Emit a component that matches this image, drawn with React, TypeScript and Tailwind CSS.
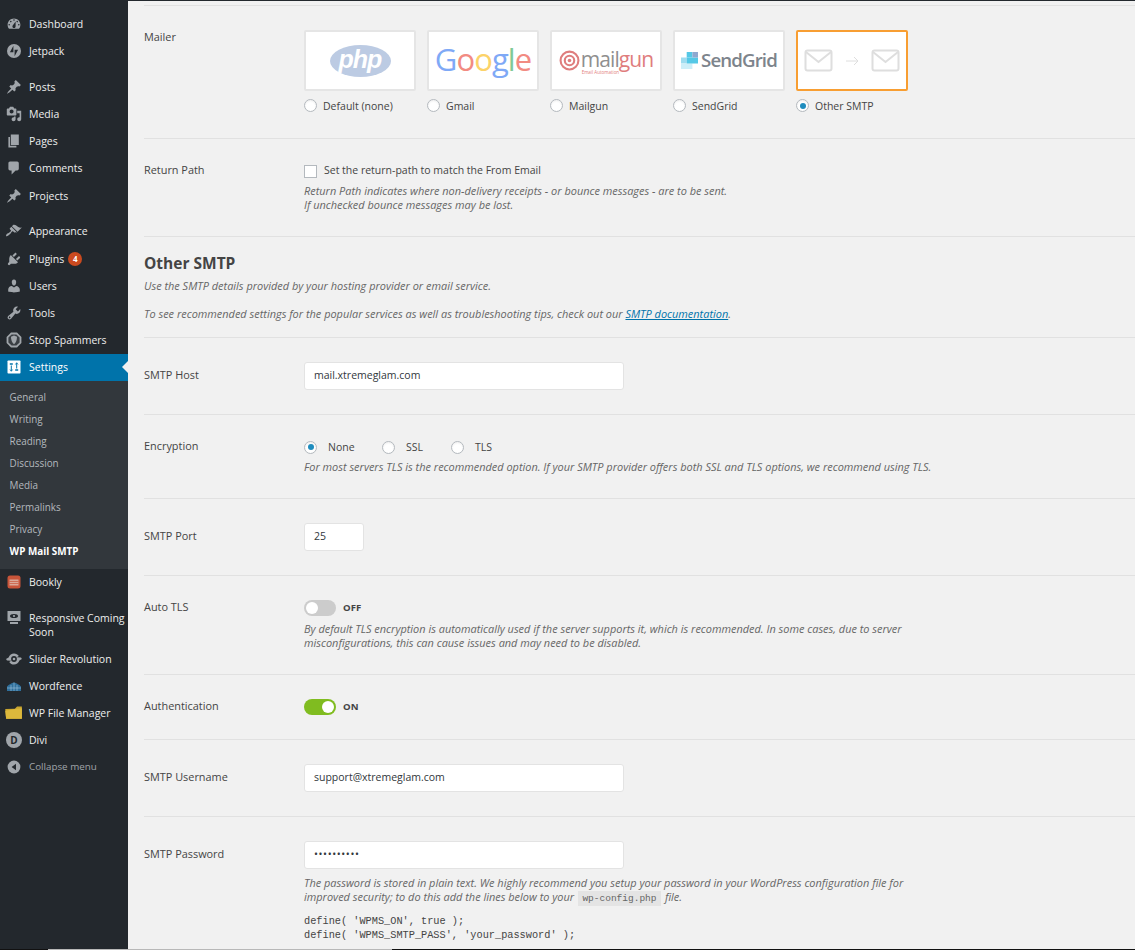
import React from "react";

const P: Record<string, string> = {
  dash: "M3.76 16h12.48c1.1-1.37 1.76-3.11 1.76-5 0-4.42-3.58-8-8-8s-8 3.58-8 8c0 1.89.66 3.63 1.76 5zM10 4c.55 0 1 .45 1 1s-.45 1-1 1-1-.45-1-1 .45-1 1-1zM6 6c.55 0 1 .45 1 1s-.45 1-1 1-1-.45-1-1 .45-1 1-1zm8 0c.55 0 1 .45 1 1s-.45 1-1 1-1-.45-1-1 .45-1 1-1zm-5.37 5.55L12 7v6c0 1.1-.9 2-2 2s-2-.9-2-2c0-.57.24-1.08.63-1.45zM4 10c.55 0 1 .45 1 1s-.45 1-1 1-1-.45-1-1 .45-1 1-1zm12 0c.55 0 1 .45 1 1s-.45 1-1 1-1-.45-1-1 .45-1 1-1z",
  pin: "M10.44 3.02l1.82-1.82 6.36 6.35-1.83 1.82c-1.05-.68-2.48-.57-3.41.36l-.75.75c-.92.93-1.04 2.35-.35 3.41l-1.83 1.82-2.41-2.41-2.8 2.79c-.42.42-3.38 2.71-3.8 2.29s1.86-3.39 2.28-3.81l2.79-2.79L4.1 9.36l1.83-1.82c1.05.69 2.48.57 3.4-.36l.75-.75c.93-.92 1.05-2.35.36-3.41z",
  media: "M13 11V4c0-.55-.45-1-1-1h-1.67L9 1H5L3.67 3H2c-.55 0-1 .45-1 1v7c0 .55.45 1 1 1h10c.55 0 1-.45 1-1zM7 4.5c1.38 0 2.5 1.12 2.5 2.5S8.38 9.5 7 9.5 4.5 8.38 4.5 7 5.62 4.5 7 4.5zM14 6h5v10.5c0 1.38-1.12 2.5-2.5 2.5S14 17.88 14 16.5s1.12-2.5 2.5-2.5c.17 0 .34.02.5.05V9h-3V6zm-4 8.05V13h2v3.5c0 1.38-1.12 2.5-2.5 2.5S7 17.88 7 16.5 8.12 14 9.5 14c.17 0 .34.02.5.05z",
  page: "M6 15V2h10v13H6zm-1 1h8v2H3V5h2v11z",
  comment: "M5 2h9c1.1 0 2 .9 2 2v7c0 1.1-.9 2-2 2h-2l-5 5v-5H5c-1.1 0-2-.9-2-2V4c0-1.1.9-2 2-2z",
  brush: "M14.48 11.06L7.41 3.99l1.5-1.5c.5-.56 2.3-.47 3.51.32 1.21.8 1.43 1.28 2.91 2.1 1.18.64 2.45 1.26 4.45.85zM13.77 11.77L6.7 4.7 4.93 6.47c-.39.39-.39 1.02 0 1.41l1.06 1.06c.39.39.39 1.03 0 1.42-.6.6-1.43 1.11-2.21 1.69-.35.26-.7.53-1.01.84C1.43 12.8.4 14.6 0 15.8c-.19.57.27 1.03.84.84 1.19-.4 2.9-1.43 4.25-2.78.31-.31.58-.66.84-1.01.58-.78 1.09-1.61 1.69-2.21.39-.39 1.03-.39 1.42 0l1.06 1.06c.39.39 1.02.39 1.41 0z",
  plug: "M13.11 4.36L9.87 7.6 8 5.73l3.24-3.24c.35-.34 1.05-.2 1.56.32.52.51.66 1.21.31 1.55zm-8 1.77l.91-1.12 9.01 9.01-1.19.84c-.71.71-2.63 1.16-3.82 1.16H6.14L4.9 17.26c-.59.59-1.54.59-2.12 0-.59-.58-.59-1.53 0-2.12l1.24-1.24v-3.88c0-1.13.4-3.19 1.09-3.89zm7.26 3.97l3.24-3.24c.34-.35 1.04-.21 1.55.31.52.51.66 1.21.31 1.55l-3.24 3.25z",
  user: "M10 9.25c-2.27 0-2.73-3.44-2.73-3.44C7 4.02 7.82 2 9.97 2c2.16 0 2.98 2.02 2.71 3.81 0 0-.41 3.44-2.68 3.44zm0 2.57L12.72 10c2.39 0 4.52 2.33 4.52 4.53v2.49s-3.65 1.13-7.24 1.13c-3.65 0-7.24-1.13-7.24-1.13v-2.49c0-2.25 1.94-4.48 4.47-4.48z",
  tool: "M16.68 9.77c-1.34 1.34-3.3 1.67-4.95.99l-5.41 6.52c-.99.99-2.59.99-3.58 0s-.99-2.59 0-3.57l6.52-5.42c-.68-1.65-.35-3.61.99-4.95 1.28-1.28 3.12-1.62 4.72-1.06l-2.89 2.89 2.82 2.82 2.86-2.87c.53 1.58.18 3.39-1.08 4.65zM3.81 16.21c.4.39 1.04.39 1.43 0 .4-.4.4-1.04 0-1.43-.39-.4-1.03-.4-1.43 0-.39.39-.39 1.03 0 1.43z",
};

function Dash({ d }: { d: string }) {
  return (
    <svg viewBox="0 0 20 20" className="w-4 h-4" fill="#a0a5aa">
      <path d={d} fillRule="evenodd" />
    </svg>
  );
}

function Custom({ name }: { name: string }) {
  const box = "w-4 h-4";
  switch (name) {
    case "jetpack":
      return (
        <svg viewBox="0 0 16 16" className={box}>
          <circle cx="8" cy="8" r="7" fill="#a0a5aa" />
          <path d="M7.4 2.8v6.4H3.9zM8.6 13.2V6.8h3.5z" fill="#23282d" />
        </svg>
      );
    case "stop":
      return (
        <svg viewBox="0 0 16 16" className={box}>
          <path d="M5 .6h6L15.4 5v6L11 15.4H5L.6 11V5z" fill="#a0a5aa" />
          <path d="M5.6 2.4h4.800l3.200 3.200v4.800l-3.200 3.200H5.600l-3.200-3.200V5.600z" fill="#3a3f44" />
          <path d="M8 3.600l3 1.200c0 3.200-.8 5.600-3 7.400-2.200-1.800-3-4.200-3-7.400z" fill="#a0a5aa" />
        </svg>
      );
    case "settings":
      return (
        <svg viewBox="0 0 16 16" className={box}>
          <rect x="1.500" y="1.500" width="13" height="13" rx=".8" fill="#fff" />
          <path d="M5.300 6.500v5.500M10.700 4v5.500" stroke="#0073aa" strokeWidth="1" />
          <path d="M3.800 5h3M9.200 11h3" stroke="#0073aa" strokeWidth="1.300" />
          <path d="M4 10.500l1.300 1.800 1.300-1.800M9.400 5.500l1.300-1.800 1.300 1.800" stroke="#0073aa" strokeWidth=".8" fill="none" />
        </svg>
      );
    case "bookly":
      return (
        <svg viewBox="0 0 16 16" className={box}>
          <rect x="1.500" y="1.500" width="13" height="13" rx="2.500" fill="#c8553a" />
          <rect x="3.500" y="5.500" width="9" height="6" fill="#d9a898" />
          <path d="M3.500 7.500h9M3.500 9.500h9" stroke="#c8553a" strokeWidth=".7" />
        </svg>
      );
    case "responsive":
      return (
        <svg viewBox="0 0 16 16" className={box}>
          <rect x="1.500" y="1" width="13" height="10" fill="#a0a5aa" />
          <ellipse cx="8" cy="6" rx="4" ry="2" fill="#23282d" />
          <circle cx="8" cy="6" r="1.100" fill="#a0a5aa" />
          <rect x="4" y="12" width="8" height="2" fill="#a0a5aa" />
        </svg>
      );
    case "slider":
      return (
        <svg viewBox="0 0 16 16" className={box}>
          <path d="M0 8l2.600-1.600C3.600 3.800 5.600 2.400 8 2.400c2 0 3.800 1 4.800 2.600l-2 1.200L15 6.600l.9 1.400-2.500 1.600c-1 2.600-3 4-5.400 4-2 0-3.800-1-4.800-2.600l2-1.200L1 9.400z" fill="#a0a5aa" />
          <circle cx="8" cy="8" r="2.900" fill="#23282d" />
          <circle cx="8" cy="8" r="1.300" fill="#a0a5aa" />
        </svg>
      );
    case "wordfence":
      return (
        <svg viewBox="0 0 16 16" className={box}>
          <path d="M1 13V8.500C3 6.500 5.500 5 8 4.500c2.500.5 5 2 7 4V13z" fill="#2f6f9b" />
          <path d="M8 4.500V13M5 7v6M11 7v6M1 10h14" stroke="#9fc3dd" strokeWidth=".6" />
        </svg>
      );
    case "folder":
      return (
        <svg viewBox="0 0 20 16" className="w-[18px] h-[14px]">
          <path d="M0 3.500 1 14.500h18V.5h-5.500L11 3.200z" fill="#c9a52f" />
          <path d="M0 5.500 11 3.500 19 2.500V14.500H1z" fill="#dcb83c" />
        </svg>
      );
    case "collapse":
      return (
        <svg viewBox="0 0 16 16" className={box}>
          <circle cx="8" cy="8" r="6.400" fill="#a0a5aa" />
          <path d="M10 4.800v6.400L5.600 8z" fill="#23282d" />
        </svg>
      );
  }
  return null;
}

function Item({
  icon,
  label,
  big,
  extra,
  mt,
}: {
  icon: React.ReactNode;
  label: React.ReactNode;
  big?: boolean;
  extra?: React.ReactNode;
  mt?: string;
}) {
  return (
    <div className={`flex items-center text-[#eeeeee] ${big ? "h-[41px]" : "h-[27.2px]"} ${mt ?? ""}`}>
      <div className={`w-[29px] shrink-0 flex justify-center pr-[1px] ${big ? "self-start pt-[6px]" : ""}`}>{icon}</div>
      <div className="leading-[14px] whitespace-nowrap">{label}</div>
      {extra}
    </div>
  );
}

function Sidebar() {
  const sub = ["General", "Writing", "Reading", "Discussion", "Media", "Permalinks", "Privacy"];
  return (
    <aside className="w-[128px] shrink-0 bg-[#23282d] pt-[9.4px] text-[10.5px]">
      <Item icon={<Dash d={P.dash} />} label="Dashboard" />
      <Item icon={<Custom name="jetpack" />} label="Jetpack" />
      <Item mt="mt-[8.400px]" icon={<Dash d={P.pin} />} label="Posts" />
      <Item icon={<Dash d={P.media} />} label="Media" />
      <Item icon={<Dash d={P.page} />} label="Pages" />
      <Item icon={<Dash d={P.comment} />} label="Comments" />
      <Item icon={<Dash d={P.pin} />} label="Projects" />
      <Item mt="mt-[8.800px]" icon={<Dash d={P.brush} />} label="Appearance" />
      <Item
        icon={<Dash d={P.plug} />}
        label={<span className="relative top-[0.5px]">Plugins</span>}
        extra={
          <span className="ml-[4px] w-[14px] h-[14px] rounded-full bg-[#ca4a1f] text-white text-[8px] font-bold flex items-center justify-center">
            4
          </span>
        }
      />
      <Item icon={<Dash d={P.user} />} label="Users" />
      <Item icon={<Dash d={P.tool} />} label="Tools" />
      <Item icon={<Custom name="stop" />} label="Stop Spammers" />
      <div className="relative bg-[#0073aa] text-white">
        <Item icon={<Custom name="settings" />} label={<span className="text-white">Settings</span>} />
        <span className="absolute right-0 top-[7px] w-0 h-0 border-y-[6.500px] border-y-transparent border-r-[6.500px] border-r-[#f1f1f1]" />
      </div>
      <div className="bg-[#32373c] pt-[5px] pb-[6.800px] text-[9.9px] text-[#b4b9be]">
        {sub.map((s) => (
          <div key={s} className="h-[22px] flex items-center pl-[9.600px]">
            {s}
          </div>
        ))}
        <div className="h-[22px] flex items-center pl-[9.600px] text-white font-bold">WP Mail SMTP</div>
      </div>
      <Item icon={<Custom name="bookly" />} label="Bookly" />
      <Item
        mt="mt-[8px]"
        big
        icon={<Custom name="responsive" />}
        label={
          <span>
            Responsive Coming
            <br />
            Soon
          </span>
        }
      />
      <Item icon={<Custom name="slider" />} label="Slider Revolution" />
      <Item icon={<Custom name="wordfence" />} label="Wordfence" />
      <Item icon={<Custom name="folder" />} label="WP File Manager" />
      <Item
        icon={
          <span className="w-4 h-4 rounded-full bg-[#a0a5aa] text-[#23282d] text-[10px] font-bold flex items-center justify-center">
            D
          </span>
        }
        label="Divi"
      />
      <div className="flex items-center h-[27px] text-[#a0a5aa] text-[9.800px]">
        <div className="w-[29px] flex justify-center pr-[1px]">
          <Custom name="collapse" />
        </div>
        Collapse menu
      </div>
    </aside>
  );
}

function Radio({ on }: { on?: boolean }) {
  return (
    <span className="w-[13px] h-[13px] shrink-0 rounded-full border border-[#b4b9be] bg-white flex items-center justify-center shadow-[inset_0_1px_2px_rgba(0,0,0,0.07)]">
      {on && <span className="w-[6px] h-[6px] rounded-full bg-[#1e8cbe]" />}
    </span>
  );
}

function Card({ children, active, label }: { children: React.ReactNode; active?: boolean; label: string }) {
  return (
    <div className="w-[112px]">
      <div
        className={`h-[61px] bg-white border-2 rounded-[2px] flex items-center justify-center overflow-hidden ${
          active ? "border-[#f89e32]" : "border-[#e5e5e5]"
        }`}
      >
        {children}
      </div>
      <div className="flex items-center gap-[6px] mt-[8px] h-[13px]">
        <Radio on={active} />
        <span className="relative top-[1px]">{label}</span>
      </div>
    </div>
  );
}

function Logos() {
  return (
    <div className="flex gap-[11px]">
      <Card label="Default (none)">
        <div className="w-[61px] h-[32px] rounded-[50%] bg-[#bccbe3] flex items-center justify-center text-white italic font-bold text-[25px] leading-none pb-[3px] font-['Liberation_Sans',sans-serif] tracking-[-1px]">
          php
        </div>
      </Card>
      <Card label="Gmail">
        <div className="text-[31px] font-medium leading-none pb-[3px] tracking-[-0.9px] font-['Open_Sans',sans-serif]">
          <span className="text-[#7fa9f6]">G</span>
          <span className="text-[#f28b82]">o</span>
          <span className="text-[#fcd36a]">o</span>
          <span className="text-[#7fa9f6]">g</span>
          <span className="text-[#80c995]">l</span>
          <span className="text-[#f28b82]">e</span>
        </div>
      </Card>
      <Card label="Mailgun">
        <div className="flex items-center">
          <svg viewBox="0 0 20 20" className="w-[21px] h-[21px] shrink-0">
            <circle cx="10" cy="10" r="8.500" fill="none" stroke="#df7d7d" strokeWidth="2" />
            <circle cx="10" cy="10" r="4.500" fill="none" stroke="#df7d7d" strokeWidth="2" />
            <circle cx="10" cy="10" r="1.700" fill="#df7d7d" />
          </svg>
          <div className="ml-[1px] relative leading-none text-[21px] font-medium tracking-[-0.9px] font-['Open_Sans',sans-serif] pb-[2px]">
            <span className="text-[#8f8f8f]">mail</span>
            <span className="text-[#df7d7d]">gun</span>
            <span className="absolute left-[1px] top-[21px] whitespace-nowrap text-[4.500px] tracking-normal font-normal text-[#df7d7d]">Email Automation</span>
          </div>
        </div>
      </Card>
      <Card label="SendGrid">
        <div className="flex items-center">
          <svg viewBox="0 0 17 17" className="w-[17px] h-[17px] shrink-0">
            <rect x="0" y="5.500" width="5.700" height="6" fill="#9fdcef" />
            <rect x="0" y="11.500" width="11.400" height="5.500" fill="#cdeef8" />
            <rect x="5.700" y="5.500" width="11.300" height="6" fill="#55c8e6" />
            <rect x="5.700" y="0" width="5.700" height="5.500" fill="#55c8e6" />
            <rect x="11.400" y="0" width="5.600" height="5.500" fill="#8fa8cf" />
          </svg>
          <span className="ml-[3px] text-[#7d848c] font-semibold text-[18.700px] tracking-[-0.9px] leading-none font-['Open_Sans',sans-serif]">
            SendGrid
          </span>
        </div>
      </Card>
      <Card label="Other SMTP" active>
        <svg viewBox="0 0 96 24" className="w-[96px] h-[24px]" fill="none">
          <rect x="1.500" y="1.500" width="26" height="20" rx="2" stroke="#dedede" strokeWidth="2" />
          <path d="M2 3l12.500 10L27 3" stroke="#dedede" strokeWidth="2" />
          <path d="M42 12h12M50 8l4 4-4 4" stroke="#dedede" strokeWidth="1" />
          <rect x="68.500" y="1.500" width="26" height="20" rx="2" stroke="#dedede" strokeWidth="2" />
          <path d="M69 3l12.500 10L94 3" stroke="#dedede" strokeWidth="2" />
        </svg>
      </Card>
    </div>
  );
}

function Row({
  label,
  h,
  children,
  last,
  field,
}: {
  label: string;
  h: string;
  children: React.ReactNode;
  last?: boolean;
  field?: boolean;
}) {
  return (
    <div className={`flex pt-[24px] ${h} ${last ? "" : "border-b border-[#e1e1e1]"}`}>
      <div className={`w-[160px] shrink-0 font-medium text-[10.9px] text-[#444] leading-[14px] ${field ? "pt-[6px]" : ""}`}>{label}</div>
      <div className="flex-1 min-w-0">{children}</div>
    </div>
  );
}

function Desc({ children, cls }: { children: React.ReactNode; cls?: string }) {
  return <p className={`italic text-[#666] text-[10.95px] leading-[14px] w-[640px] ${cls ?? ""}`}>{children}</p>;
}

function Field({ v, w, dots }: { v: string; w?: string; dots?: boolean }) {
  return (
    <div
      className={`h-[28px] ${w ?? "w-[320px]"} bg-white border border-[#e3e3e3] rounded-[3px] flex items-center pl-[9px] text-[#32373c] ${
        dots ? "tracking-[0.6px]" : ""
      }`}
    >
      {v}
    </div>
  );
}

function Toggle({ on }: { on?: boolean }) {
  return (
    <div className="flex items-center gap-[7px]">
      <span
        className={`w-[32px] h-[16px] rounded-full flex items-center px-[2px] ${
          on ? "bg-[#80bc20] justify-end" : "bg-[#cccccc] justify-start"
        }`}
      >
        <span className="w-[12px] h-[12px] rounded-full bg-white" />
      </span>
      <span className="text-[9.600px] font-bold text-[#444]">{on ? "ON" : "OFF"}</span>
    </div>
  );
}

export default function App() {
  return (
    <div className="w-[1135px] h-[950px] overflow-hidden flex flex-col bg-[#f1f1f1] text-[#444] text-[10.5px] font-['Open_Sans',sans-serif]">
      <div className="h-px bg-[#23282d] shrink-0" />
      <div className="flex-1 min-h-0 flex">
        <Sidebar />
        <main className="flex-1 min-w-0 pl-4 pt-[4px] overflow-hidden">
          <div className="h-[134px] flex pt-[24px] border-y border-y-[#e1e1e1]">
            <div className="w-[160px] shrink-0 font-medium text-[10.9px] leading-[14px]">Mailer</div>
            <Logos />
          </div>
          <Row label="Return Path" h="h-[98px]">
            <div className="flex items-center gap-[7px] h-[14px] mt-[1px]">
              <span className="w-[13px] h-[13px] bg-white border border-[#b4b9be] shrink-0" />
              <span>Set the return-path to match the From Email</span>
            </div>
            <Desc cls="mt-[6px]">
              Return Path indicates where non-delivery receipts - or bounce messages - are to be sent.
              <br />
              If unchecked bounce messages may be lost.
            </Desc>
          </Row>
          <div className="h-[101px] pt-[17px] border-b border-[#e1e1e1]">
            <h2 className="text-[15.500px] font-bold text-[#444] leading-[19px]">Other SMTP</h2>
            <p className="italic text-[#666] text-[10.95px] leading-[14px] mt-[6px]">
              Use the SMTP details provided by your hosting provider or email service.
            </p>
            <p className="italic text-[#666] text-[10.95px] leading-[14px] mt-[14px]">
              To see recommended settings for the popular services as well as troubleshooting tips, check out our{" "}
              <span className="text-[#0073aa] underline">SMTP documentation</span>.
            </p>
          </div>
          <Row label="SMTP Host" h="h-[77px]" field>
            <Field v="mail.xtremeglam.com" />
          </Row>
          <Row label="Encryption" h="h-[84px]">
            <div className="flex items-center h-[14px] mt-[1px]">
              <Radio on />
              <span className="ml-[11px] w-[54px] relative top-[0.5px]">None</span>
              <Radio />
              <span className="ml-[11px] w-[45px] relative top-[0.5px]">SSL</span>
              <Radio />
              <span className="ml-[11px] relative top-[0.5px]">TLS</span>
            </div>
            <p className="italic text-[#666] text-[10.95px] leading-[14px] mt-[6px] whitespace-nowrap">
              For most servers TLS is the recommended option. If your SMTP provider offers both SSL and TLS options, we recommend using TLS.
            </p>
          </Row>
          <Row label="SMTP Port" h="h-[77px]" field>
            <Field v="25" w="w-[60px]" />
          </Row>
          <Row label="Auto TLS" h="h-[99px]">
            <Toggle />
            <Desc cls="mt-[6px]">
              By default TLS encryption is automatically used if the server supports it, which is recommended. In some cases, due to server
              <br />
              misconfigurations, this can cause issues and may need to be disabled.
            </Desc>
          </Row>
          <Row label="Authentication" h="h-[65px]">
            <Toggle on />
          </Row>
          <Row label="SMTP Username" h="h-[77px]" field>
            <Field v="support@xtremeglam.com" />
          </Row>
          <Row label="SMTP Password" h="h-[200px]" last field>
            <Field v="••••••••••" dots />
            <Desc cls="mt-[7px]">
              The password is stored in plain text. We highly recommend you setup your password in your WordPress configuration file for
              <br />
              improved security; to do this add the lines below to your{" "}
              <code className="not-italic bg-[#e4e4e4] px-[4.500px] py-[2px] mx-[1px] text-[9.500px] font-['Liberation_Mono',monospace]">
                wp-config.php
              </code>{" "}
              file.
            </Desc>
            <pre className="mt-[8px] text-[10.27px] leading-[14px] text-[#444] font-['Liberation_Mono',monospace]">
              {"define( 'WPMS_ON', true );\ndefine( 'WPMS_SMTP_PASS', 'your_password' );"}
            </pre>
          </Row>
        </main>
      </div>
      <div className="h-px shrink-0 flex bg-[#111111]">
        <div className="w-[48px] shrink-0" />
        <div className="w-[344px] shrink-0 bg-[#b8b8b8]" />
      </div>
    </div>
  );
}
